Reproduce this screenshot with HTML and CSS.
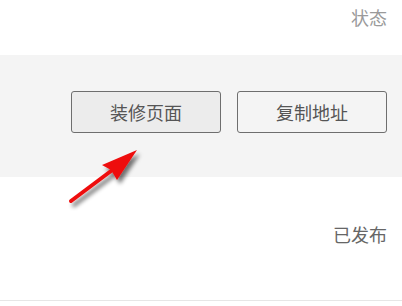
FILE: index.html
```html
<!DOCTYPE html>
<html lang="zh">
<head>
<meta charset="utf-8">
<link rel="stylesheet" href="styles.css">
</head>
<body>
<div class="page">
  <div class="header"><span class="status-title">状态</span></div>
  <div class="band">
    <button class="btn btn-primary">装修页面</button>
    <button class="btn">复制地址</button>
  </div>
  <div class="row"><span class="status-value">已发布</span></div>
  <svg class="arrow" width="402" height="306" viewBox="0 0 402 306">
    <defs>
      <filter id="sh" x="-30%" y="-30%" width="160%" height="160%">
        <feGaussianBlur in="SourceAlpha" stdDeviation="2"/>
        <feOffset dx="3" dy="4" result="b"/>
        <feComponentTransfer><feFuncA type="linear" slope="0.55"/></feComponentTransfer>
        <feMerge><feMergeNode/><feMergeNode in="SourceGraphic"/></feMerge>
      </filter>
    </defs>
    <g filter="url(#sh)">
      <line x1="71" y1="201" x2="115" y2="168" stroke="#ee1111" stroke-width="4" stroke-linecap="round"/>
      <polygon points="137,150 102,165 111,170 117,180" fill="#ee1111"/>
    </g>
  </svg>
</div>
</body>
</html>
```
FILE: styles.css
```css
html, body {
  margin: 0;
  padding: 0;
  background: #ffffff;
}
.page {
  position: relative;
  width: 402px;
  height: 306px;
  overflow: hidden;
  font-family: "Noto Sans CJK SC", "Noto Sans", sans-serif;
}
.header {
  height: 55px;
  display: flex;
  justify-content: flex-end;
  align-items: flex-start;
  padding: 6px 15px 0 0;
  box-sizing: border-box;
}
.status-title {
  font-size: 18px;
  line-height: 23px;
  color: #9a9a9a;
}
.band {
  height: 122px;
  background: #f4f4f4;
  display: flex;
  justify-content: flex-end;
  align-items: flex-start;
  gap: 16px;
  padding: 36px 15px 0 0;
  box-sizing: border-box;
}
.btn {
  width: 150px;
  height: 42px;
  border: 1px solid #6e6e6e;
  border-radius: 3px;
  background: #f4f4f4;
  color: #555555;
  font-family: "Noto Sans CJK SC", "Noto Sans", sans-serif;
  font-size: 18px;
  padding: 0;
  margin: 0;
}
.btn-primary {
  background: #ececec;
}
.row {
  height: 124px;
  border-bottom: 1px solid #e6e6e6;
  display: flex;
  justify-content: flex-end;
  align-items: center;
  padding-right: 15px;
  box-sizing: border-box;
}
.status-value {
  font-size: 18px;
  color: #666666;
  margin-top: -9px;
}
.arrow {
  position: absolute;
  left: 0;
  top: 0;
  pointer-events: none;
}
```
